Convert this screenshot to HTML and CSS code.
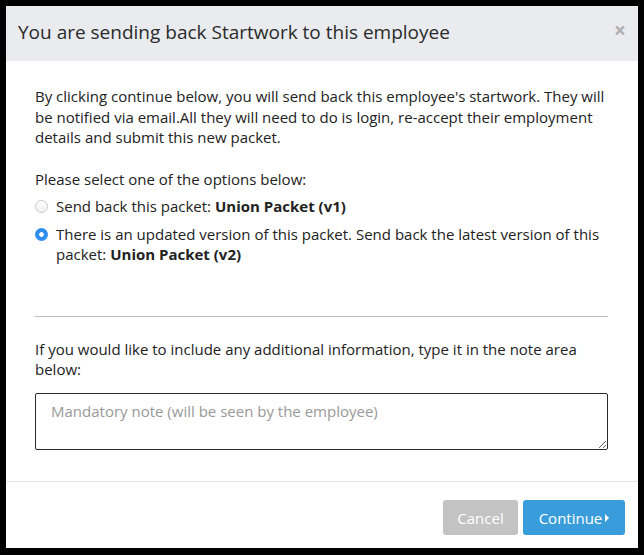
FILE: index.html
```html
<!DOCTYPE html>
<html>
<head>
<meta charset="utf-8">
<link rel="stylesheet" href="styles.css">
</head>
<body>
<div class="modal">
  <div class="modal-header">
    <h1 class="modal-title">You are sending back Startwork to this employee</h1>
    <span class="close">&times;</span>
  </div>
  <div class="modal-body">
    <p class="intro">By clicking continue below, you will send back this employee's startwork. They will be notified via email.All they will need to do is login, re-accept their employment details and submit this new packet.</p>
    <p class="select-label">Please select one of the options below:</p>
    <div class="option">
      <span class="radio"></span>
      <span class="option-text">Send back this packet: <b>Union Packet (v1)</b></span>
    </div>
    <div class="option">
      <span class="radio checked"></span>
      <span class="option-text">There is an updated version of this packet. Send back the latest version of this packet: <b>Union Packet (v2)</b></span>
    </div>
    <hr class="divider">
    <p class="note-label">If you would like to include any additional information, type it in the note area below:</p>
    <textarea class="note" placeholder="Mandatory note (will be seen by the employee)"></textarea>
  </div>
  <div class="modal-footer">
    <button class="btn btn-cancel">Cancel</button>
    <button class="btn btn-continue">Continue<span class="caret"></span></button>
  </div>
</div>
</body>
</html>
```
FILE: styles.css
```css
html, body {
  margin: 0;
  padding: 0;
  background: #000;
}
body {
  width: 644px;
  height: 555px;
  padding: 6px 6px 7px 6px;
  box-sizing: border-box;
  font-family: "Open Sans", "DejaVu Sans", sans-serif;
  color: #222;
}
.modal {
  background: #fff;
  height: 542px;
  display: flex;
  flex-direction: column;
}
.modal-header {
  background: #e9ebee;
  height: 55px;
  flex: none;
  display: flex;
  align-items: center;
  justify-content: space-between;
  padding: 0 12px 4px 12px;
  box-sizing: border-box;
}
.modal-title {
  margin: 0;
  font-size: 19px;
  font-weight: 400;
  color: #2a2a2a;
}
.close {
  color: #b0b0b0;
  font-size: 21px;
  font-weight: 700;
  line-height: 1;
  margin-top: -2px;
}
.modal-body {
  flex: 1;
  padding: 25px 30px 0 29px;
  font-size: 15px;
  line-height: 20.5px;
}
.modal-body p {
  margin: 0;
}
.select-label {
  margin-top: 21px !important;
}
.option {
  display: flex;
  align-items: flex-start;
  margin-top: 7px;
}
.radio {
  flex: none;
  width: 13px;
  height: 13px;
  border-radius: 50%;
  border: 1px solid #c8c8c8;
  box-sizing: border-box;
  margin: 4px 8px 0 0;
  background: linear-gradient(#fff, #f0f0f0);
}
.radio.checked {
  border: none;
  background: radial-gradient(circle, #fff 0 2px, #2f8ef0 2.6px);
}
.option-text b {
  font-weight: 700;
}
.divider {
  border: none;
  border-top: 1px solid #bdbdbd;
  margin: 51px 0 0 0;
}
.note-label {
  margin-top: 22px !important;
}
.note {
  display: block;
  width: 100%;
  height: 57px;
  margin-top: 13px;
  box-sizing: border-box;
  border: 1px solid #2a2a2a;
  border-radius: 2px;
  padding: 7px 15px;
  font-family: "Open Sans", "DejaVu Sans", sans-serif;
  font-size: 15px;
  line-height: 20px;
  resize: vertical;
}
.note::placeholder {
  color: #999;
}
.modal-footer {
  border-top: 1px solid #e5e5e5;
  flex: none;
  padding: 18px 13px 13px 0;
  display: flex;
  justify-content: flex-end;
  gap: 5px;
}
.btn {
  height: 35px;
  border: none;
  border-radius: 3px;
  color: #fff;
  font-family: "Open Sans", "DejaVu Sans", sans-serif;
  font-size: 15px;
  padding: 0 14px;
  display: flex;
  align-items: center;
}
.btn-cancel {
  background: #c3c3c3;
  width: 75px;
  justify-content: center;
}
.btn-continue {
  background: #3a9ddb;
  width: 102px;
  justify-content: center;
}
.caret {
  display: inline-block;
  width: 0;
  height: 0;
  border-top: 4px solid transparent;
  border-bottom: 4px solid transparent;
  border-left: 4px solid #fff;
  margin-left: 3px;
}
```
